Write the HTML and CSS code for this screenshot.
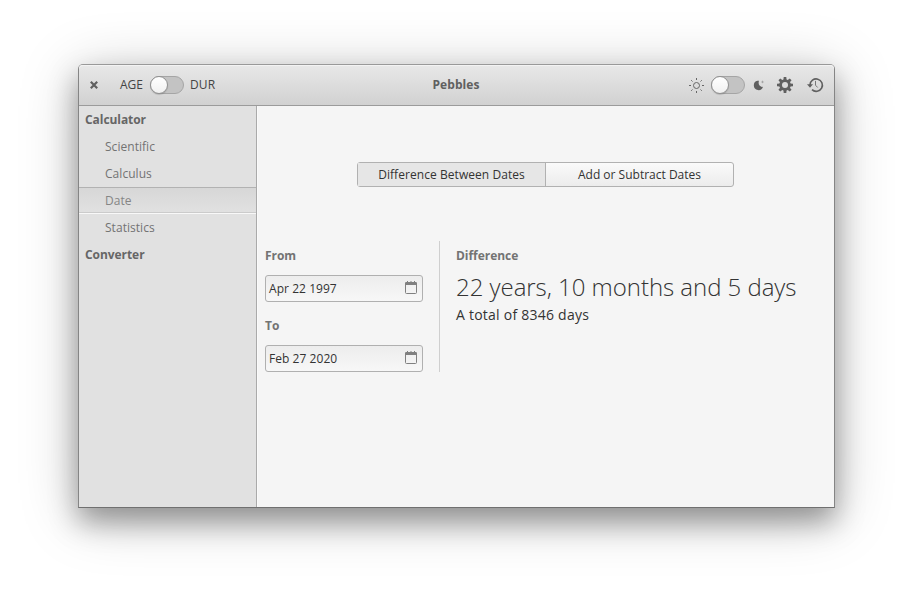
FILE: index.html
```html
<!DOCTYPE html>
<html lang="en">
<head>
<meta charset="utf-8">
<title>Pebbles</title>
<link rel="stylesheet" href="styles.css">
</head>
<body>
<div class="window">
  <header class="titlebar">
    <div class="side">
      <svg class="close" width="8" height="8" viewBox="0 0 8 8"><path d="M.8.8 7.2 7.2M7.2.8.8 7.2" stroke="#606060" stroke-width="2.2"/></svg>
      <span class="age">AGE</span>
      <span class="switch"><i></i></span>
      <span class="dur">DUR</span>
    </div>
    <h1>Pebbles</h1>
    <div class="side end">
      <svg class="sun" width="16" height="16" viewBox="0 0 16 16" fill="none" stroke="#666"><circle cx="8.5" cy="8.5" r="3"/><path d="M8.5 1v2M8.5 14v2M1 8.5h2M14 8.5h2M3.2 3.2l1.3 1.3M12.5 12.5l1.3 1.3M3.2 13.8l1.3-1.3M12.5 4.5l1.3-1.3"/></svg>
      <span class="switch"><i></i></span>
      <svg class="moon" width="12" height="12" viewBox="0 0 12 12" fill="#606060"><path d="M5 1.7A4.7 4.7 0 1 0 10 7.7 4.4 4.4 0 0 1 5 1.7Z" fill="none"/><path d="M4.6 1.8A4.7 4.7 0 1 0 10 7.8C7.4 8.500 4.600 5.500 6 1.800Z"/><path d="m9.5 1.2.5 1.2 1.2.5-1.2.5-.5 1.2-.5-1.2-1.2-.5 1.2-.5Z" opacity=".5"/></svg>
      <svg class="gear" width="16" height="16" viewBox="0 0 16 16"><g fill="#606060"><path id="tooth" d="M6.4 3 6.7 0h2.6l.3 3v10l-.3 3H6.7l-.3-3Z"/><use href="#tooth" transform="rotate(45 8 8)"/><use href="#tooth" transform="rotate(90 8 8)"/><use href="#tooth" transform="rotate(135 8 8)"/><circle cx="8" cy="8" r="5.8"/></g><circle cx="8" cy="8" r="3" fill="#dadada"/></svg>
      <svg class="history" width="17" height="16" viewBox="0 0 17 16" fill="none" stroke="#606060"><path d="M3 8a6.2 6.2 0 1 1 2 4.7" stroke-width="1.6"/><path d="M0 7.2h6L3 10.8Z" fill="#606060" stroke="none"/><path d="M8.5 3.9v4.3l2.2 2.3" stroke="#777"/></svg>
    </div>
  </header>
  <div class="body">
    <nav class="sidebar">
      <div class="row group">Calculator</div>
      <div class="row">Scientific</div>
      <div class="row">Calculus</div>
      <div class="row selected">Date</div>
      <div class="row">Statistics</div>
      <div class="row group">Converter</div>
    </nav>
    <main>
      <div class="tabs">
        <div class="tab active">Difference Between Dates</div>
        <div class="tab">Add or Subtract Dates</div>
      </div>
      <div class="columns">
        <section class="dates">
          <h2>From</h2>
          <div class="entry"><span>Apr 22 1997</span><svg width="12" height="13" viewBox="0 0 12 13"><path d="M.5 3v8.5a1 1 0 0 0 1 1h9a1 1 0 0 0 1-1V3" fill="none" stroke="#808080"/><path d="M0 4V2.2Q0 1 1.2 1H2V0h1v1h2.5V0h1v1H9V0h1v1h.8Q12 1 12 2.2V4Z" fill="#808080"/></svg></div>
          <h2>To</h2>
          <div class="entry"><span>Feb 27 2020</span><svg width="12" height="13" viewBox="0 0 12 13"><path d="M.5 3v8.5a1 1 0 0 0 1 1h9a1 1 0 0 0 1-1V3" fill="none" stroke="#808080"/><path d="M0 4V2.2Q0 1 1.2 1H2V0h1v1h2.5V0h1v1H9V0h1v1h.8Q12 1 12 2.2V4Z" fill="#808080"/></svg></div>
        </section>
        <section class="result">
          <h2>Difference</h2>
          <div class="big">22 years, 10 months and 5 days</div>
          <div class="total">A total of 8346 days</div>
        </section>
      </div>
    </main>
  </div>
</div>
</body>
</html>
```
FILE: styles.css
```css
* { box-sizing: border-box; }
body {
  margin: 0;
  height: 600px;
  overflow: hidden;
  background: #fff;
  font: 12px/27px "Open Sans", sans-serif;
  color: #333;
}
h1, h2 { margin: 0; font-size: 12px; font-weight: 700; letter-spacing: -.03px; }
.window {
  width: 757px;
  height: 444px;
  margin: 64px 0 0 78px;
  display: flex;
  flex-direction: column;
  border: 1px solid;
  border-color: #999 #858585 #707070;
  border-radius: 5px 5px 0 0;
  background: #f5f5f5;
  box-shadow: 0 14px 28px rgba(0, 0, 0, .34), 0 8px 60px rgba(0, 0, 0, .22);
}
.titlebar {
  height: 41px;
  display: flex;
  align-items: center;
  border-bottom: 1px solid #9b9b9b;
  border-radius: 4px 4px 0 0;
  background: linear-gradient(#e8e8e8, #d1d1d1);
  box-shadow: inset 0 1px #f3f3f3;
}
.titlebar h1 { padding: 0 1px 2px 0; color: #606060; letter-spacing: .08px; }
.side { flex: 1; display: flex; align-items: center; color: #444; }
.end { justify-content: flex-end; }
.close { margin: 0 22px 1px 11px; }
.age { width: 30px; padding-bottom: 2px; }
.dur { margin-left: 6px; padding-bottom: 2px; letter-spacing: .15px; }
.switch {
  width: 34px;
  height: 18px;
  border: 1px solid #a5a5a5;
  border-radius: 9px;
  background: #c3c3c3;
}
.switch i {
  display: block;
  width: 18px;
  height: 18px;
  margin: -1px;
  border: 1px solid #929292;
  border-radius: 50%;
  background: linear-gradient(#fff, #f1f1f1);
  box-shadow: 0 1px 1px rgba(0, 0, 0, .15);
}
.sun { margin-right: 7px; }
.moon { margin: 0 12px 0 8px; }
.gear { margin-right: 14px; }
.history { margin-right: 10px; }
.body { flex: 1; display: flex; }
.sidebar { width: 178px; border-right: 1px solid #aaa; background: #e1e1e1; }
.row { height: 27px; padding-left: 26px; color: #737373; letter-spacing: .04px; }
.group { padding-left: 6px; font-weight: 700; color: #666; letter-spacing: -.06px; }
.selected {
  line-height: 25px;
  border-top: 1px solid #b2b2b2;
  border-bottom: 1px solid #f8f8f8;
  background: linear-gradient(#d7d7d7, #e1e1e1);
  box-shadow: inset 0 -1px #cbcbcb;
  color: #858585;
}
main { flex: 1; box-shadow: inset 1px 0 #fafafa; }
.tabs {
  width: 377px;
  height: 25px;
  margin: 56px auto 54px;
  display: flex;
  border: 1px solid #b1b1b1;
  border-radius: 3px;
  background: linear-gradient(#fafafa, #ececec);
  line-height: 23px;
  text-align: center;
}
.tab { flex: 1; }
.active { border-right: 1px solid #b1b1b1; background: #e6e6e6; letter-spacing: .06px; }
.columns { display: flex; height: 131px; }
.dates { width: 183px; padding: 1px 16px 0 8px; border-right: 1px solid #cfcfcf; }
.result { padding: 1px 0 0 16px; }
h2 { color: #737373; }
.entry {
  height: 27px;
  margin: 6px 0 10px;
  padding: 0 5px 0 3px;
  display: flex;
  align-items: center;
  justify-content: space-between;
  border: 1px solid #b0b0b0;
  border-radius: 3px;
  background: linear-gradient(#ededed, #f7f7f7);
  line-height: 25px;
  letter-spacing: .05px;
}
.entry svg { margin-bottom: 2px; }
.big { font-size: 24px; font-weight: 300; line-height: 36px; white-space: nowrap; letter-spacing: -.04px; }
.total { font-size: 14px; line-height: 19px; letter-spacing: .24px; }
```
